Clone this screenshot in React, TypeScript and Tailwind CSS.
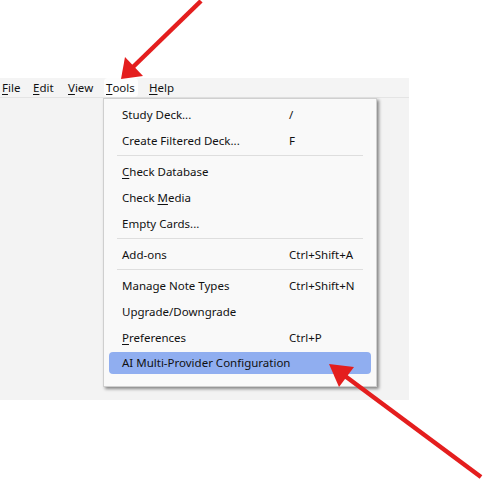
import React from "react"

type Item = { label: React.ReactNode; shortcut?: string; active?: boolean }

const groups: Item[][] = [
  [{ label: "Study Deck...", shortcut: "/" }, { label: "Create Filtered Deck...", shortcut: "F" }],
  [
    { label: <><u className="underline-offset-2">C</u>heck Database</> },
    { label: <>Check <u className="underline-offset-2">M</u>edia</> },
    { label: "Empty Cards..." },
  ],
  [{ label: "Add-ons", shortcut: "Ctrl+Shift+A" }],
  [
    { label: "Manage Note Types", shortcut: "Ctrl+Shift+N" },
    { label: "Upgrade/Downgrade" },
    { label: <><u className="underline-offset-2">P</u>references</>, shortcut: "Ctrl+P" },
    { label: "AI Multi-Provider Configuration", active: true },
  ],
]

function MenuRow({ item }: { item: Item }) {
  if (item.active) {
    return (
      <div className="h-[26px] pt-px">
        <div className="mx-[5px] flex h-[22px] items-center rounded-[4px] bg-[#90aef0] pl-[13px]">
          <span>{item.label}</span>
        </div>
      </div>
    )
  }
  return (
    <div className="mx-[5px] flex h-[26px] items-center pl-[13px]">
      <span className="w-[167px] shrink-0">{item.label}</span>
      {item.shortcut && <span>{item.shortcut}</span>}
    </div>
  )
}

export default function App() {
  return (
    <div className="relative h-[482px] w-[483px] overflow-hidden bg-white text-[11.5px] text-[#111] [font-family:'Noto_Sans',sans-serif]">
      {/* window area */}
      <div className="mt-[78px] h-[322px] w-[409px] bg-[#f3f3f3]">
        <div className="flex h-[20px] items-center border-b border-[#e4e4e4] bg-[#f4f4f4] pl-[2px]">
          <span className="w-[31px]"><u className="underline-offset-2">F</u>ile</span>
          <span className="w-[35px]"><u className="underline-offset-2">E</u>dit</span>
          <span className="w-[36px]"><u className="underline-offset-2">V</u>iew</span>
          <span className="flex h-[19px] w-[34px] items-center rounded-[4px] bg-[#fdfdfd] px-[2px]">
            <u className="underline-offset-2">T</u>ools
          </span>
          <span className="ml-[11px]"><u className="underline-offset-2">H</u>elp</span>
        </div>
      </div>

      {/* Tools dropdown */}
      <div className="absolute left-[103px] top-[98px] w-[274px] border border-[#cfcfcf] bg-[#f9f9f9] pb-[9px] pt-[3px] shadow-[2px_2px_3px_rgba(0,0,0,0.45)]">
        {groups.map((g, i) => (
          <div key={i}>
            {i > 0 && (
              <div className="flex h-[5px] items-start pt-px">
                <div className="mx-[13px] h-px flex-1 bg-[#dedede]" />
              </div>
            )}
            {g.map((item, j) => (
              <MenuRow key={j} item={item} />
            ))}
          </div>
        ))}
      </div>

      {/* annotation arrows */}
      <svg className="pointer-events-none absolute inset-0" width="483" height="482" viewBox="0 0 483 482">
        <line x1="201" y1="1" x2="133" y2="67" stroke="#e41e1e" strokeWidth="4.5" />
        <polygon points="121,79 125,57 143,76" fill="#e41e1e" />
        <line x1="481" y1="477" x2="345" y2="376" stroke="#e41e1e" strokeWidth="4.5" />
        <polygon points="329,364 339,387 354,367" fill="#e41e1e" />
      </svg>
    </div>
  )
}
